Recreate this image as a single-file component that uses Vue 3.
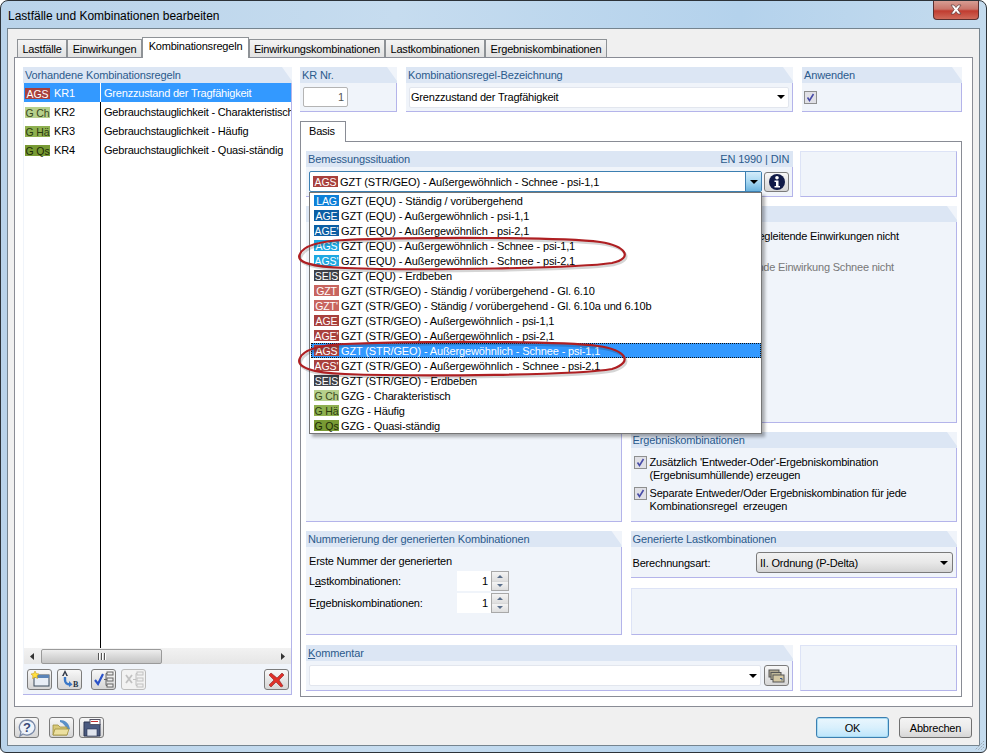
<script setup>
const tabs = [
  { t: 'Lastfälle', w: 50 },
  { t: 'Einwirkungen', w: 75 },
  { t: 'Kombinationsregeln', w: 107, active: true },
  { t: 'Einwirkungskombinationen', w: 136 },
  { t: 'Lastkombinationen', w: 100 },
  { t: 'Ergebniskombinationen', w: 122 }
]
const rules = [
  { b: 'AGS', c: 'b-ags', kr: 'KR1', n: 'Grenzzustand der Tragfähigkeit', sel: true },
  { b: 'G Ch', c: 'b-gch', kr: 'KR2', n: 'Gebrauchstauglichkeit - Charakteristisch' },
  { b: 'G Hä', c: 'b-gha', kr: 'KR3', n: 'Gebrauchstauglichkeit - Häufig' },
  { b: 'G Qs', c: 'b-gqs', kr: 'KR4', n: 'Gebrauchstauglichkeit - Quasi-ständig' }
]
const options = [
  { b: 'LAG', c: 'b-lag', t: 'GZT (EQU) - Ständig / vorübergehend' },
  { b: 'AGE', c: 'b-age', t: 'GZT (EQU) - Außergewöhnlich - psi-1,1' },
  { b: "AGE'", c: 'b-age', t: 'GZT (EQU) - Außergewöhnlich - psi-2,1' },
  { b: 'AGS', c: 'b-agsb', t: 'GZT (EQU) - Außergewöhnlich - Schnee - psi-1,1' },
  { b: "AGS'", c: 'b-agsb', t: 'GZT (EQU) - Außergewöhnlich - Schnee - psi-2,1' },
  { b: 'SEIS', c: 'b-seis', t: 'GZT (EQU) - Erdbeben' },
  { b: 'GZT', c: 'b-gzt', t: 'GZT (STR/GEO) - Ständig / vorübergehend - Gl. 6.10' },
  { b: "GZT'", c: 'b-gzt', t: 'GZT (STR/GEO) - Ständig / vorübergehend - Gl. 6.10a und 6.10b' },
  { b: 'AGE', c: 'b-ags', t: 'GZT (STR/GEO) - Außergewöhnlich - psi-1,1' },
  { b: "AGE'", c: 'b-ags', t: 'GZT (STR/GEO) - Außergewöhnlich - psi-2,1' },
  { b: 'AGS', c: 'b-ags', t: 'GZT (STR/GEO) - Außergewöhnlich - Schnee - psi-1,1', sel: true },
  { b: "AGS'", c: 'b-ags', t: 'GZT (STR/GEO) - Außergewöhnlich - Schnee - psi-2,1' },
  { b: 'SEIS', c: 'b-seis', t: 'GZT (STR/GEO) - Erdbeben' },
  { b: 'G Ch', c: 'b-gch', t: 'GZG - Charakteristisch' },
  { b: 'G Hä', c: 'b-gha', t: 'GZG - Häufig' },
  { b: 'G Qs', c: 'b-gqs', t: 'GZG - Quasi-ständig' }
]
</script>

<template>
  <div class="window">
    <div class="title">
      <span class="title-text">Lastfälle und Kombinationen bearbeiten</span>
      <div class="close">
        <svg width="14" height="11" viewBox="0 0 14 11"><path d="M2 1h3l2 2.5L9 1h3L8.8 5.5 12 10H9L7 7.5 5 10H2l3.2-4.5z" fill="#fff" stroke="#5a3a3a" stroke-width=".7"/></svg>
      </div>
    </div>
    <div class="client">
      <div class="tabs">
        <div v-for="t in tabs" :key="t.t" class="tab" :class="{ active: t.active }" :style="{ width: t.w + 'px' }">{{ t.t }}</div>
      </div>
      <div class="panel">
        <div class="group leftcol">
          <div class="ghead">Vorhandene Kombinationsregeln</div>
          <div class="list-wrap">
            <div class="list">
              <div class="col-a">
                <div v-for="r in rules" :key="r.kr" class="cell" :class="{ sel: r.sel }">
                  <span class="badge" :class="r.c">{{ r.b }}</span><span class="kr">{{ r.kr }}</span>
                </div>
              </div>
              <div class="col-b">
                <div v-for="r in rules" :key="r.kr" class="cell name" :class="{ sel: r.sel }">{{ r.n }}</div>
              </div>
            </div>
            <div class="hscroll">
              <svg class="sarrow" width="5" height="7" viewBox="0 0 5 7"><path d="M4 0v7L0 3.5z" fill="#333"/></svg>
              <div class="thumb"><i></i><i></i><i></i></div>
              <div class="strack"></div>
              <svg class="sarrow" width="5" height="7" viewBox="0 0 5 7"><path d="M1 0v7l4-3.500z" fill="#333"/></svg>
            </div>
            <div class="toolbar">
              <button class="ibtn">
                <svg width="20" height="16" viewBox="0 0 20 16"><rect x="4" y="4" width="15" height="11" fill="#e8eef6" stroke="#3a4a5a"/><rect x="4" y="4" width="15" height="3" fill="#5a84b8"/><path d="M5 0l1.200 2.500L9 3 7 4.800 7.500 7.500 5 6.200 2.500 7.500 3 4.800 1 3l2.800-.5z" fill="#ffe040" stroke="#c8a020" stroke-width=".6"/></svg>
              </button>
              <button class="ibtn">
                <svg width="21" height="18" viewBox="0 0 21 18"><path d="M6 0l-3 6h1.700l1.300-3 1.300 3H9z" fill="#333a48"/><path d="M6 7v3c0 3 2 4.500 5 4.500" fill="none" stroke="#3a78c8" stroke-width="2.400"/><path d="M10 11l3.500 3.500L10 17z" fill="#3a78c8"/><text x="14" y="16.500" class="icon-b">B</text></svg>
              </button>
              <button class="ibtn gap-l">
                <svg width="20" height="17" viewBox="0 0 20 17"><path d="M1 9l3 4 5-10" fill="none" stroke="#2a52c8" stroke-width="2.200"/><path d="M10 8.500h2M12 2.500v12M12 2.500h1M12 8.500h1M12 14.500h1" stroke="#666" fill="none"/><rect x="13" y="1" width="6" height="3" fill="#eee" stroke="#666"/><rect x="13" y="7" width="6" height="3" fill="#eee" stroke="#666"/><rect x="13" y="13" width="6" height="3" fill="#eee" stroke="#666"/></svg>
              </button>
              <button class="ibtn off">
                <svg width="20" height="17" viewBox="0 0 20 17" opacity=".45"><path d="M2 4l6 8M8 4l-6 8" stroke="#888" stroke-width="1.800"/><path d="M9 8.500h3M12 2.500v12M12 2.500h1M12 14.500h1" stroke="#888" fill="none"/><rect x="13" y="1" width="6" height="3" fill="#eee" stroke="#888"/><rect x="13" y="7" width="6" height="3" fill="#eee" stroke="#888"/><rect x="13" y="13" width="6" height="3" fill="#eee" stroke="#888"/></svg>
              </button>
              <button class="ibtn push">
                <svg width="18" height="17" viewBox="0 0 18 17"><path d="M3 2l6 5 5-5 2 2-5 5 4 6-2 1-5-5-5 5-2-2 5-5-5-5z" fill="#e03028" stroke="#8a2020" stroke-width=".6"/></svg>
              </button>
            </div>
          </div>
        </div>

        <div class="rightcol">
          <div class="toprow">
            <div class="group w-kr">
              <div class="ghead">KR Nr.</div>
              <div class="gbody top-body"><div class="nr">1</div></div>
            </div>
            <div class="group w-bez">
              <div class="ghead">Kombinationsregel-Bezeichnung</div>
              <div class="gbody top-body">
                <div class="textcombo"><span>Grenzzustand der Tragfähigkeit</span><i class="tri"></i></div>
              </div>
            </div>
            <div class="group w-anw">
              <div class="ghead">Anwenden</div>
              <div class="gbody top-body anw-body"><span class="chk"></span></div>
            </div>
          </div>

          <div class="basis-tab">Basis</div>
          <div class="basis">
            <div class="row r-bem">
              <div class="group w-bem">
                <div class="ghead split"><span>Bemessungssituation</span><span>EN 1990 | DIN</span></div>
                <div class="gbody bem-body">
                  <div class="combo-wrap">
                    <div class="combo">
                      <span class="badge b-ags">AGS</span><span>GZT (STR/GEO) - Außergewöhnlich - Schnee - psi-1,1</span>
                      <div class="combo-btn"><i class="tri"></i></div>
                    </div>
                    <div class="dropdown">
                      <div v-for="o in options" :key="o.t" class="opt" :class="{ sel: o.sel }">
                        <span class="badge" :class="o.c">{{ o.b }}</span><span class="opt-t">{{ o.t }}</span>
                      </div>
                    </div>
                  </div>
                  <button class="ibtn info">
                    <svg width="18" height="18" viewBox="0 0 18 18"><circle cx="9" cy="9" r="8" fill="#101a48"/><circle cx="9" cy="4.800" r="1.800" fill="#fff"/><path d="M6.500 7.500H10.500V13H12V14.500H6.500V13H8V9H6.500z" fill="#fff"/></svg>
                  </button>
                </div>
              </div>
              <div class="empty w-side"></div>
            </div>

            <div class="row r-mid">
              <div class="group w-l">
                <div class="ghead"></div>
                <div class="gbody"></div>
              </div>
              <div class="col-r">
                <div class="group h-ein">
                  <div class="ghead"></div>
                  <div class="gbody ein-body">
                    <div class="ein-a">begleitende Einwirkungen nicht</div>
                    <div class="ein-b">begleitende Einwirkung Schnee nicht</div>
                  </div>
                </div>
                <div class="group h-erg">
                  <div class="ghead">Ergebniskombinationen</div>
                  <div class="gbody erg-body">
                    <div class="chkrow"><span class="chk"></span><span>Zusätzlich 'Entweder-Oder'-Ergebniskombination<br>(Ergebnisumhüllende) erzeugen</span></div>
                    <div class="chkrow"><span class="chk"></span><span>Separate Entweder/Oder Ergebniskombination für jede<br>Kombinationsregel&nbsp; erzeugen</span></div>
                  </div>
                </div>
              </div>
            </div>

            <div class="row r-num">
              <div class="group w-l">
                <div class="ghead">Nummerierung der generierten Kombinationen</div>
                <div class="gbody num-body">
                  <div class="num-h">Erste Nummer der generierten</div>
                  <div class="num-row"><span>L<u>a</u>stkombinationen:</span><div class="spin"><span class="spin-v">1</span><div class="spin-b"><b><i class="up"></i></b><b><i class="dn"></i></b></div></div></div>
                  <div class="num-row"><span>E<u>r</u>gebniskombinationen:</span><div class="spin"><span class="spin-v">1</span><div class="spin-b"><b><i class="up"></i></b><b><i class="dn"></i></b></div></div></div>
                </div>
              </div>
              <div class="col-r">
                <div class="group h-gen">
                  <div class="ghead">Generierte Lastkombinationen</div>
                  <div class="gbody gen-body">
                    <span>Berechnungsart:</span>
                    <div class="select"><span>II. Ordnung (P-Delta)</span><i class="tri"></i></div>
                  </div>
                </div>
                <div class="empty h-emp"></div>
              </div>
            </div>

            <div class="row r-kom">
              <div class="group w-bem">
                <div class="ghead"><u>K</u>ommentar</div>
                <div class="gbody kom-body">
                  <div class="kom-in"><i class="tri"></i></div>
                  <button class="ibtn kom-btn">
                    <svg width="17" height="14" viewBox="0 0 17 14"><rect x="1" y="1" width="10" height="7" fill="#b0a890" stroke="#555"/><rect x="3" y="3.500" width="10" height="7" fill="#c0b898" stroke="#555"/><rect x="5" y="6" width="11" height="7" fill="#d4c8a4" stroke="#555"/><path d="M12 9.500h2v2" stroke="#3a5a8a" fill="none"/></svg>
                  </button>
                </div>
              </div>
              <div class="empty w-side"></div>
            </div>
          </div>
        </div>
      </div>

      <div class="footer">
        <button class="ibtn fb">
          <svg width="20" height="18" viewBox="0 0 20 18"><path d="M10 1a8 7.500 0 1 1-4 14l-3 2 1-4A8 7.500 0 0 1 10 1z" fill="#eef3fa" stroke="#7a8aa8" stroke-width="1.300"/><text x="10" y="13" class="icon-q">?</text></svg>
        </button>
        <button class="ibtn fb fb2">
          <svg width="20" height="18" viewBox="0 0 20 18"><path d="M8 1c5 0 9 3 10 9l-3 1C14 7 11 4 8 3z" fill="#5a90c8"/><path d="M1 6h5l2 2h7v8H1z" fill="#d8c878" stroke="#a09040" stroke-width=".8"/><path d="M1 16l2-6h14l-2 6z" fill="#ece0a0" stroke="#a09040" stroke-width=".8"/></svg>
        </button>
        <button class="ibtn fb">
          <svg width="18" height="18" viewBox="0 0 18 18"><path d="M1 3h14l2 2v12H1z" fill="#4a5a80" stroke="#2a3450"/><rect x="7" y="0.500" width="10" height="5" fill="#fff" stroke="#556"/><rect x="4" y="10" width="10" height="7" fill="#dfe4ee" stroke="#2a3450" stroke-width=".6"/><rect x="8" y="2" width="7" height="1" fill="#c03030"/></svg>
        </button>
        <button class="btn ok">OK</button>
        <button class="btn">Abbrechen</button>
      </div>
      <svg class="grip" width="12" height="12" viewBox="0 0 12 12"><path d="M11 2L2 11M11 5L5 11M11 8L8 11" stroke="#9aa4ae" stroke-dasharray="1.500 1"/></svg>
    </div>

    <svg class="marks" width="987" height="753" viewBox="0 0 987 753">
      <g fill="none">
        <g stroke="#000" opacity=".16" stroke-width="2.500" transform="translate(1.500 2)">
          <path d="M345 240C420 237 560 237 600 242 626 246 634 258 612 263 580 268 420 271 345 268 312 267 295 262 300 254 304 245 322 241 345 240z"/>
          <path d="M345 344C420 341 560 341 598 346 626 350 634 362 612 369 580 375 420 377 345 374 312 373 295 367 300 358 304 349 322 345 345 344z"/>
        </g>
        <g stroke="#ae1f22" stroke-width="2.200">
          <path d="M345 240C420 237 560 237 600 242 626 246 634 258 612 263 580 268 420 271 345 268 312 267 295 262 300 254 304 245 322 241 345 240z"/>
          <path d="M345 344C420 341 560 341 598 346 626 350 634 362 612 369 580 375 420 377 345 374 312 373 295 367 300 358 304 349 322 345 345 344z"/>
        </g>
      </g>
    </svg>
  </div>
</template>

<style scoped>
* { box-sizing: border-box; }
.window {
  position: relative;
  width: 987px;
  height: 753px;
  padding: 0 6px 6px;
  border: 1px solid #2c3238;
  border-radius: 8px 8px 6px 6px;
  background: linear-gradient(90deg, #b9d3ea 0%, #c6dcef 40%, #b4d2ec 75%, #c4dbee 100%);
  font-family: "Liberation Sans", Arial, sans-serif;
  font-size: 11px;
  letter-spacing: -.2px;
  color: #000;
  display: flex;
  flex-direction: column;
  overflow: hidden;
}
.title {
  height: 27px;
  flex: none;
  display: flex;
  align-items: center;
  justify-content: space-between;
  padding: 0 0 0 1px;
}
.title-text { font-size: 12px; letter-spacing: 0; margin-top: 2px; }
.close {
  width: 46px;
  height: 19px;
  margin: -9px 1px 0 0;
  border: 1px solid #5a3030;
  border-top: 0;
  border-radius: 0 0 4px 4px;
  background: linear-gradient(#d79d93 0%, #c9756a 45%, #c13c30 55%, #cf6a5a 100%);
  display: flex;
  align-items: center;
  justify-content: center;
}
.client {
  position: relative;
  flex: 1;
  border: 1px solid #75848f;
  background: #f0f0f0;
  padding: 8px 6px 0;
  display: flex;
  flex-direction: column;
}
.tabs { display: flex; height: 20px; padding-left: 3px; align-items: flex-end; position: relative; z-index: 1; }
.tab {
  height: 18px;
  border: 1px solid #8e9296;
  border-bottom: 0;
  text-align: center;
  line-height: 18px;
  white-space: nowrap;
  background: linear-gradient(#f4f4f4, #e2e2e2);
}
.tab.active { height: 21px; margin-bottom: -1px; background: #fff; line-height: 17px; }
.panel {
  height: 650px;
  border: 1px solid #898c95;
  background: #fff;
  padding: 9px 9px 0 8px;
  display: flex;
  gap: 8px;
}
.group { display: flex; flex-direction: column; background: #f0f4fa; }
.ghead {
  flex: none;
  height: 16px;
  line-height: 16px;
  padding-left: 2px;
  background: #dce6f4;
  color: #2b5a8c;
  letter-spacing: -.13px;
  clip-path: polygon(0 0, calc(100% - 10px) 0, 100% 14px, 100% 100%, 0 100%);
  white-space: nowrap;
}
.gbody { flex: 1; border-right: 1px solid #b4b4ea; border-bottom: 1px solid #b4b4ea; }
.leftcol { width: 269px; height: 628px; }
.list-wrap { flex: 1; display: flex; flex-direction: column; border-right: 1px solid #b4b4ea; border-bottom: 1px solid #b4b4ea; padding-left: 1px; }
.list { height: 565px; background: #fff; display: flex; flex: none; }
.col-a { width: 77px; flex: none; border-right: 1px solid #000; }
.col-b { flex: 1; min-width: 0; overflow: hidden; }
.cell { height: 19px; display: flex; align-items: center; white-space: nowrap; padding: 1px 0 0 1px; }
.cell.name { padding-left: 3px; }
.cell.sel { background: #3399ff; color: #fff; }
.col-a .cell.sel { margin-right: -1px; border-right: 1px solid #fff; }
.kr { margin-left: 4px; }
.badge {
  flex: none;
  width: 25px;
  height: 11px;
  line-height: 12px;
  font-size: 10.5px;
  letter-spacing: -.1px;
  text-align: center;
  white-space: nowrap;
  color: #fff;
}
.b-ags { background: #a8403c; }
.b-gch { background: #b6d08c; color: #3a4a20; }
.b-gha { background: #8fb050; color: #2a3a10; }
.b-gqs { background: #789a34; color: #1e2c08; }
.b-lag { background: #0d80d8; }
.b-age { background: #0c5fa4; }
.b-agsb { background: #1fa8e2; }
.b-seis { background: #3e4048; }
.b-gzt { background: #c8655f; }
.hscroll { height: 16px; flex: none; display: flex; align-items: center; background: linear-gradient(#f2f2f2, #e6e6e6); padding: 0 6px; }
.sarrow { flex: none; }
.thumb {
  width: 121px;
  height: 15px;
  margin-left: 6px;
  border: 1px solid #9a9a9a;
  border-radius: 2px;
  background: linear-gradient(#eeeeee, #d8d8d8 50%, #c4c4c4);
  display: flex;
  gap: 1px;
  justify-content: center;
  align-items: center;
}
.thumb i { width: 2px; height: 7px; background: #555; border-right: 1px solid #fff; }
.strack { flex: 1; }
.toolbar { flex: 1; display: flex; align-items: center; gap: 5px; padding: 0 2px 0 3px; background: #f0f4fa; }
.ibtn {
  width: 25px;
  height: 21px;
  padding: 0;
  border: 1px solid #7b7b7b;
  border-radius: 3px;
  background: linear-gradient(#f8f8f8, #e6e6e6 50%, #d6d6d6);
  display: flex;
  align-items: center;
  justify-content: center;
  flex: none;
}
.gap-l { margin-left: 4px; }
.off { border-color: #bcbcbc; background: #f2f2f2; }
.push { margin-left: auto; }
.icon-b { font: bold 8px "Liberation Serif", serif; fill: #234; }
.icon-q { font: bold 13px "Liberation Sans", sans-serif; fill: #3a4a78; text-anchor: middle; }

.rightcol { width: 662px; display: flex; flex-direction: column; }
.toprow { display: flex; gap: 9px; height: 45px; flex: none; }
.w-kr { width: 97px; }
.w-bez { width: 387px; }
.w-anw { width: 160px; }
.top-body { display: flex; align-items: center; padding-left: 3px; }
.nr {
  width: 45px;
  height: 20px;
  border: 1px solid #b4b4b4;
  border-radius: 2px;
  background: #fff;
  color: #555;
  text-align: right;
  line-height: 18px;
  padding-right: 3px;
}
.textcombo, .kom-in {
  position: relative;
  height: 21px;
  background: #fff;
  border: 1px solid #e2e6ee;
  border-radius: 2px;
  display: flex;
  align-items: center;
  justify-content: space-between;
  padding: 0 3px 0 1px;
}
.textcombo { width: 380px; }
.tri { display: block; width: 0; height: 0; border: 4px solid transparent; border-top: 4px solid #000; border-bottom: 0; flex: none; }
.chk {
  flex: none;
  width: 13px;
  height: 13px;
  border: 1px solid #8e8f8f;
  background: #e0e0e6 url("data:image/svg+xml,%3Csvg xmlns='http://www.w3.org/2000/svg' width='11' height='11'%3E%3Cpath d='M2.500 5.500l2 3 4-6.500' fill='none' stroke='%23484ca8' stroke-width='1.600'/%3E%3C/svg%3E") center no-repeat;
}
.anw-body { padding-left: 2px; }
.basis-tab {
  width: 46px;
  height: 21px;
  margin: 9px 0 -1px;
  border: 1px solid #898c95;
  border-bottom: 0;
  background: #fff;
  padding-left: 8px;
  line-height: 18px;
  position: relative;
  z-index: 1;
  flex: none;
}
.basis {
  height: 556px;
  border: 1px solid #898c95;
  padding: 9px 4px 0 5px;
  display: flex;
  flex-direction: column;
  background: #fff;
  flex: none;
}
.row { display: flex; flex: none; }
.r-bem { height: 46px; gap: 7px; }
.w-bem { width: 488px; }
.w-side { width: 157px; }
.empty { background: #f0f4fa; border: 1px solid #dde3f6; border-right-color: #b4b4ea; border-bottom-color: #b4b4ea; }
.split { display: flex; justify-content: space-between; padding-right: 4px; clip-path: none; }
.bem-body { display: flex; align-items: center; padding: 0 0 0 3px; gap: 2px; }
.combo-wrap { position: relative; z-index: 5; letter-spacing: -.13px; }
.combo {
  width: 453px;
  height: 21px;
  border: 1px solid #3c7fb1;
  border-radius: 2px;
  background: #fff;
  display: flex;
  align-items: center;
  padding-left: 3px;
  white-space: nowrap;
}
.combo > .badge { margin-right: 2px; }
.combo-btn {
  margin-left: auto;
  width: 16px;
  height: 19px;
  border-left: 1px solid #3c7fb1;
  background: linear-gradient(#d4ecf9, #a8d8f2 50%, #6cb4de);
  display: flex;
  align-items: center;
  justify-content: center;
}
.dropdown {
  position: absolute;
  left: 0;
  top: 21px;
  width: 453px;
  height: 242px;
  background: #fff;
  border: 1px solid #767676;
  box-shadow: 3px 3px 3px rgba(0, 0, 0, .3);
}
.opt { height: 15px; margin-left: 1px; display: flex; align-items: center; padding-left: 3px; white-space: nowrap; }
.opt.sel { background: #3399ff; color: #fff; outline: 1px dotted #111; outline-offset: -1px; }
.opt-t { margin-left: 2px; }
.info { width: 25px; height: 20px; }
.r-mid { height: 316px; gap: 9px; margin-top: 9px; }
.w-l { width: 316px; }
.col-r { width: 327px; display: flex; flex-direction: column; }
.h-ein { height: 217px; }
.ein-body { padding-top: 7px; white-space: nowrap; overflow: hidden; }
.ein-a { margin-left: 122px; height: 31px; line-height: 15px; }
.ein-b { margin-left: 90px; color: #777; line-height: 15px; }
.h-erg { height: 90px; margin-top: 9px; }
.erg-body { padding: 8px 3px 0 3px; }
.chkrow { display: flex; gap: 3px; line-height: 13px; margin-bottom: 5px; white-space: nowrap; }
.r-num { height: 104px; gap: 9px; margin-top: 9px; }
.num-body { padding: 7px 3px 0 3px; }
.num-h { height: 14px; line-height: 14px; }
.num-row { display: flex; align-items: center; height: 22px; margin-top: 2px; position: relative; white-space: nowrap; }
.num-row + .num-row { margin-top: 0; }
.spin { position: absolute; left: 148px; top: 1px; width: 52px; height: 20px; display: flex; background: #fff; }
.spin-v { flex: 1; text-align: right; line-height: 20px; padding-right: 3px; }
.spin-b { width: 18px; border: 1px solid #a8a8a8; display: flex; flex-direction: column; gap: 1px; background: #d8d8d8; }
.spin-b b { flex: 1; background: linear-gradient(#f4f4f4, #dedede); display: flex; align-items: center; justify-content: center; }
.up, .dn { display: block; width: 0; height: 0; border: 3px solid transparent; border-top: 0; border-bottom: 3px solid #5a6e8a; }
.dn { border-bottom: 0; border-top: 3px solid #5a6e8a; }
.h-gen { height: 47px; }
.gen-body { display: flex; align-items: center; padding: 1px 3px 0 2px; justify-content: space-between; }
.select {
  width: 197px;
  height: 21px;
  border: 1px solid #7a7a7a;
  border-radius: 3px;
  background: linear-gradient(#f2f2f2, #e8e8e8 50%, #d4d4d4);
  display: flex;
  align-items: center;
  justify-content: space-between;
  padding: 0 4px 0 3px;
}
.h-emp { height: 47px; margin-top: 10px; }
.r-kom { height: 46px; gap: 7px; margin-top: 10px; }
.kom-body { display: flex; align-items: center; padding: 0 3px 0 3px; gap: 3px; }
.kom-in { flex: 1; justify-content: flex-end; }
.kom-btn { width: 25px; height: 21px; }
.footer { flex: 1; display: flex; align-items: flex-start; padding: 10px 1px 0 0; gap: 5px; }
.fb { width: 25px; height: 21px; }
.fb + .fb2 { margin-left: 5px; }
.btn {
  width: 73px;
  height: 21px;
  padding: 0;
  font: inherit;
  letter-spacing: inherit;
  border: 1px solid #707070;
  border-radius: 3px;
  background: linear-gradient(#f4f4f4, #ebebeb 50%, #d6d6d6);
  margin-left: 5px;
}
.ok { margin-left: auto; border-color: #3c7fb1; box-shadow: inset 0 0 0 1px #a8dcf4; background: linear-gradient(#eaf6fd, #d9f0fc 50%, #bce5fc); }
.grip { position: absolute; right: -6px; bottom: -6px; }
.marks { position: absolute; left: -1px; top: -1px; z-index: 9; pointer-events: none; }
</style>
